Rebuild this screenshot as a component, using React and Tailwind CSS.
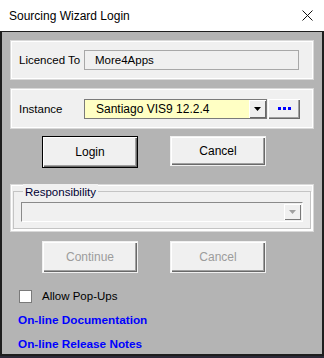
import React from 'react';

const font = { fontFamily: '"Liberation Sans", Arial, sans-serif' };

const Panel = ({ className = '', children }) => (
  <div
    className={`shrink-0 mx-[8px] bg-[#f0f0f0] border border-[#d9d9d9] shadow-[inset_1px_1px_0_#ffffff,inset_-1px_-1px_0_#ffffff] ${className}`}
  >
    {children}
  </div>
);

const Button = ({ children, primary, disabled, className = '' }) => (
  <button
    type="button"
    className={`w-[96px] bg-[#f0f0f0] text-[12px] leading-none border ${
      primary ? 'border-black' : 'border-[#f0f0f0]'
    } shadow-[inset_1px_1px_0_#ffffff,inset_-1px_-1px_0_#696969,inset_-2px_-2px_0_#a0a0a0] ${
      disabled ? 'text-[#9c9c9c]' : 'text-black'
    } ${className}`}
  >
    {children}
  </button>
);

const Arrow = ({ color }) => (
  <svg width="7" height="4" viewBox="0 0 7 4">
    <polygon points="0,0 7,0 3.5,4" fill={color} />
  </svg>
);

export default function App() {
  return (
    <div className="w-[324px] h-[358px] bg-[#2c2a38] text-[12px] leading-[16px]" style={font}>
      <div className="w-[324px] h-[356px] flex flex-col">
        <div className="shrink-0 h-[31px] bg-white flex items-center justify-between pl-[9px] pr-[11px]">
          <span className="text-[12px] text-black">Sourcing Wizard Login</span>
          <svg width="11" height="11" viewBox="0 0 11 11">
            <path d="M0.5 0.5 L10.5 10.5 M10.5 0.5 L0.5 10.5" stroke="#111" strokeWidth="1" />
          </svg>
        </div>
        <div className="flex-1 bg-[#b4b4b4] border-x-2 border-b-2 border-t border-[#1e1e1e] flex flex-col">
          <Panel className="mt-[8px] h-[40px] flex items-center pl-[8px]">
            <span className="w-[65px] text-[11.5px]">Licenced To</span>
            <div className="w-[215px] h-[20px] border border-[#a8a8a8] bg-[#f0f0f0] flex items-center pl-[10px] text-[11.5px]">
              More4Apps
            </div>
          </Panel>

          <Panel className="mt-[8px] h-[41px] flex items-center pl-[8px]">
            <span className="w-[65px] text-[11.5px]">Instance</span>
            <div className="w-[183px] h-[20px] border border-[#7a7a7a] bg-[#ffffc4] flex items-center">
              <span className="flex-1 pl-[11px] text-[12px]">Santiago VIS9 12.2.4</span>
              <div className="w-[17px] h-[18px] bg-[#f0f0f0] flex items-center justify-center shadow-[inset_1px_1px_0_#ffffff,inset_-1px_-1px_0_#696969]">
                <Arrow color="#000" />
              </div>
            </div>
            <div className="ml-[1px] w-[32px] h-[20px] bg-[#f0f0f0] flex items-center justify-center gap-[2px] shadow-[inset_1px_1px_0_#ffffff,inset_-1px_-1px_0_#696969,inset_-2px_-2px_0_#a0a0a0]">
              <span className="w-[3px] h-[3px] bg-[#0000ff]" />
              <span className="w-[3px] h-[3px] bg-[#0000ff]" />
              <span className="w-[3px] h-[3px] bg-[#0000ff]" />
            </div>
          </Panel>

          <div className="shrink-0 mt-[7px] flex items-start pl-[40px] gap-[32px]">
            <Button primary className="h-[32px]">Login</Button>
            <Button className="h-[30px]">Cancel</Button>
          </div>

          <Panel className="mt-[16px] h-[48px] pt-[6px] px-[2px]">
            <div className="relative h-[38px] border border-[#c4c4c4] shadow-[1px_1px_0_#ffffff] pt-[10px] px-[7px]">
              <span className="absolute -top-[8px] left-[9px] px-[2px] bg-[#f0f0f0] text-[11.5px] text-[#000033]">
                Responsibility
              </span>
              <div className="h-[20px] border border-[#8a8a8a] border-b-white border-r-white bg-[#f0f0f0] flex items-center justify-end pr-[1px]">
                <div className="w-[17px] h-[16px] flex items-center justify-center shadow-[inset_1px_1px_0_#ffffff,inset_-1px_-1px_0_#7a7a7a]">
                  <Arrow color="#a0a0a0" />
                </div>
              </div>
            </div>
          </Panel>

          <div className="shrink-0 mt-[9px] flex pl-[40px] gap-[32px]">
            <Button disabled className="h-[32px]">Continue</Button>
            <Button disabled className="h-[32px]">Cancel</Button>
          </div>

          <label className="shrink-0 mt-[15px] ml-[17px] h-[16px] flex items-center gap-[10px] text-[11.5px]">
            <span className="w-[13px] h-[13px] bg-white border border-[#7a7a7a]" />
            Allow Pop-Ups
          </label>

          <a className="shrink-0 mt-[8px] ml-[16px] h-[16px] text-[11.75px] font-bold text-[#0000ff]">On-line Documentation</a>
          <a className="shrink-0 mt-[8px] ml-[16px] h-[16px] text-[11.75px] font-bold text-[#0000ff]">On-line Release Notes</a>
        </div>
      </div>
    </div>
  );
}
